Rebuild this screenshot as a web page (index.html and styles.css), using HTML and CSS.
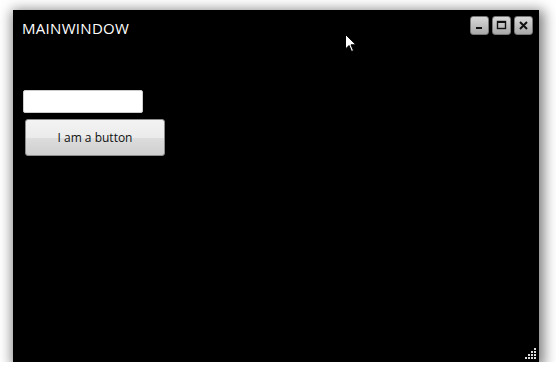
FILE: index.html
```html
<!DOCTYPE html>
<html>
    <head>
        <meta charset="utf-8">
        <title>MainWindow</title>
        <link rel="stylesheet" href="styles.css">
    </head>
    <body>
        <div class="window">
            <div class="titlebar">
                <span class="title">MAINWINDOW</span>
                <div class="caption-btns">
                    <div class="cap-btn">
                        <svg width="19" height="19" viewBox="0 0 19 19"><rect x="6" y="11" width="6" height="2" fill="#111"/></svg>
                    </div>
                    <div class="cap-btn">
                        <svg width="19" height="19" viewBox="0 0 19 19"><rect x="5.5" y="5.5" width="8" height="7" fill="none" stroke="#111" stroke-width="1.4"/><rect x="5" y="5" width="9" height="2" fill="#111"/></svg>
                    </div>
                    <div class="cap-btn">
                        <svg width="19" height="19" viewBox="0 0 19 19"><path d="M6 6 L13 13 M13 6 L6 13" stroke="#111" stroke-width="2"/></svg>
                    </div>
                </div>
            </div>
            <div class="content">
                <input type="text" class="textbox">
                <button class="btn">I am a button</button>
            </div>
            <div class="grip">
                <svg width="12" height="12" viewBox="0 0 12 12" fill="#ddd">
                    <rect x="9" y="0" width="2" height="2"/>
                    <rect x="6" y="3" width="2" height="2"/><rect x="9" y="3" width="2" height="2"/>
                    <rect x="3" y="6" width="2" height="2"/><rect x="6" y="6" width="2" height="2"/><rect x="9" y="6" width="2" height="2"/>
                    <rect x="0" y="9" width="2" height="2"/><rect x="3" y="9" width="2" height="2"/><rect x="6" y="9" width="2" height="2"/><rect x="9" y="9" width="2" height="2"/>
                </svg>
            </div>
            <!-- mouse pointer -->
            <svg class="cursor" width="12" height="19" viewBox="0 0 12 19">
                <path d="M0.5 0.5 L0.5 15 L4 11.5 L6.5 17.5 L8.5 16.5 L6 10.8 L11 10.8 Z" fill="#fff" stroke="#000" stroke-width="1"/>
            </svg>
        </div>
    </body>
</html>
```

FILE: styles.css
```css
body {
    margin: 0px;
    background-color: #fff;
    padding: 10px 0 0 13px;
    font-family: "Open Sans", "Noto Sans", sans-serif;
}
.window {
    position: relative;
    width: 526px;
    height: 352px;
    background-color: #000;
    box-shadow: 2px 3px 12px 3px rgba(0, 0, 0, 0.5);
    display: flex;
    flex-direction: column;
}
.titlebar {
    display: flex;
    justify-content: space-between;
    align-items: flex-start;
    padding: 6px 6px 0 9px;
    height: 40px;
}
.title {
    color: #fff;
    font-size: 15px;
    letter-spacing: 0.3px;
    line-height: 24px;
}
.caption-btns {
    display: flex;
    gap: 3px;
}
.cap-btn {
    width: 19px;
    height: 19px;
    box-sizing: border-box;
    border-radius: 3px;
    background-image: linear-gradient(to bottom, #d9d9d9, #a9a9a9);
    border: 1px solid #777;
    display: flex;
    align-items: center;
    justify-content: center;
}
.cap-btn svg {
    flex: none;
}
.content {
    display: flex;
    flex-direction: column;
    align-items: flex-start;
    padding: 34px 0 0 10px;
}
.textbox {
    width: 120px;
    height: 23px;
    box-sizing: border-box;
    border: 1px solid #ccc;
    border-radius: 2px;
    background-color: #fff;
    margin: 0;
    padding: 0 4px;
}
.btn {
    margin: 6px 0 0 2px;
    width: 140px;
    height: 37px;
    box-sizing: border-box;
    border: 1px solid #8c8c8c;
    border-radius: 3px;
    background-image: linear-gradient(to bottom, #f3f3f3 0%, #ebebeb 50%, #dddddd 51%, #cfcfcf 100%);
    font-family: "Open Sans", "Noto Sans", sans-serif;
    font-size: 12px;
    color: #111;
}
.grip {
    position: absolute;
    right: 2px;
    bottom: 2px;
    line-height: 0;
}
.cursor {
    position: absolute;
    left: 332px;
    top: 24px;
}
```
